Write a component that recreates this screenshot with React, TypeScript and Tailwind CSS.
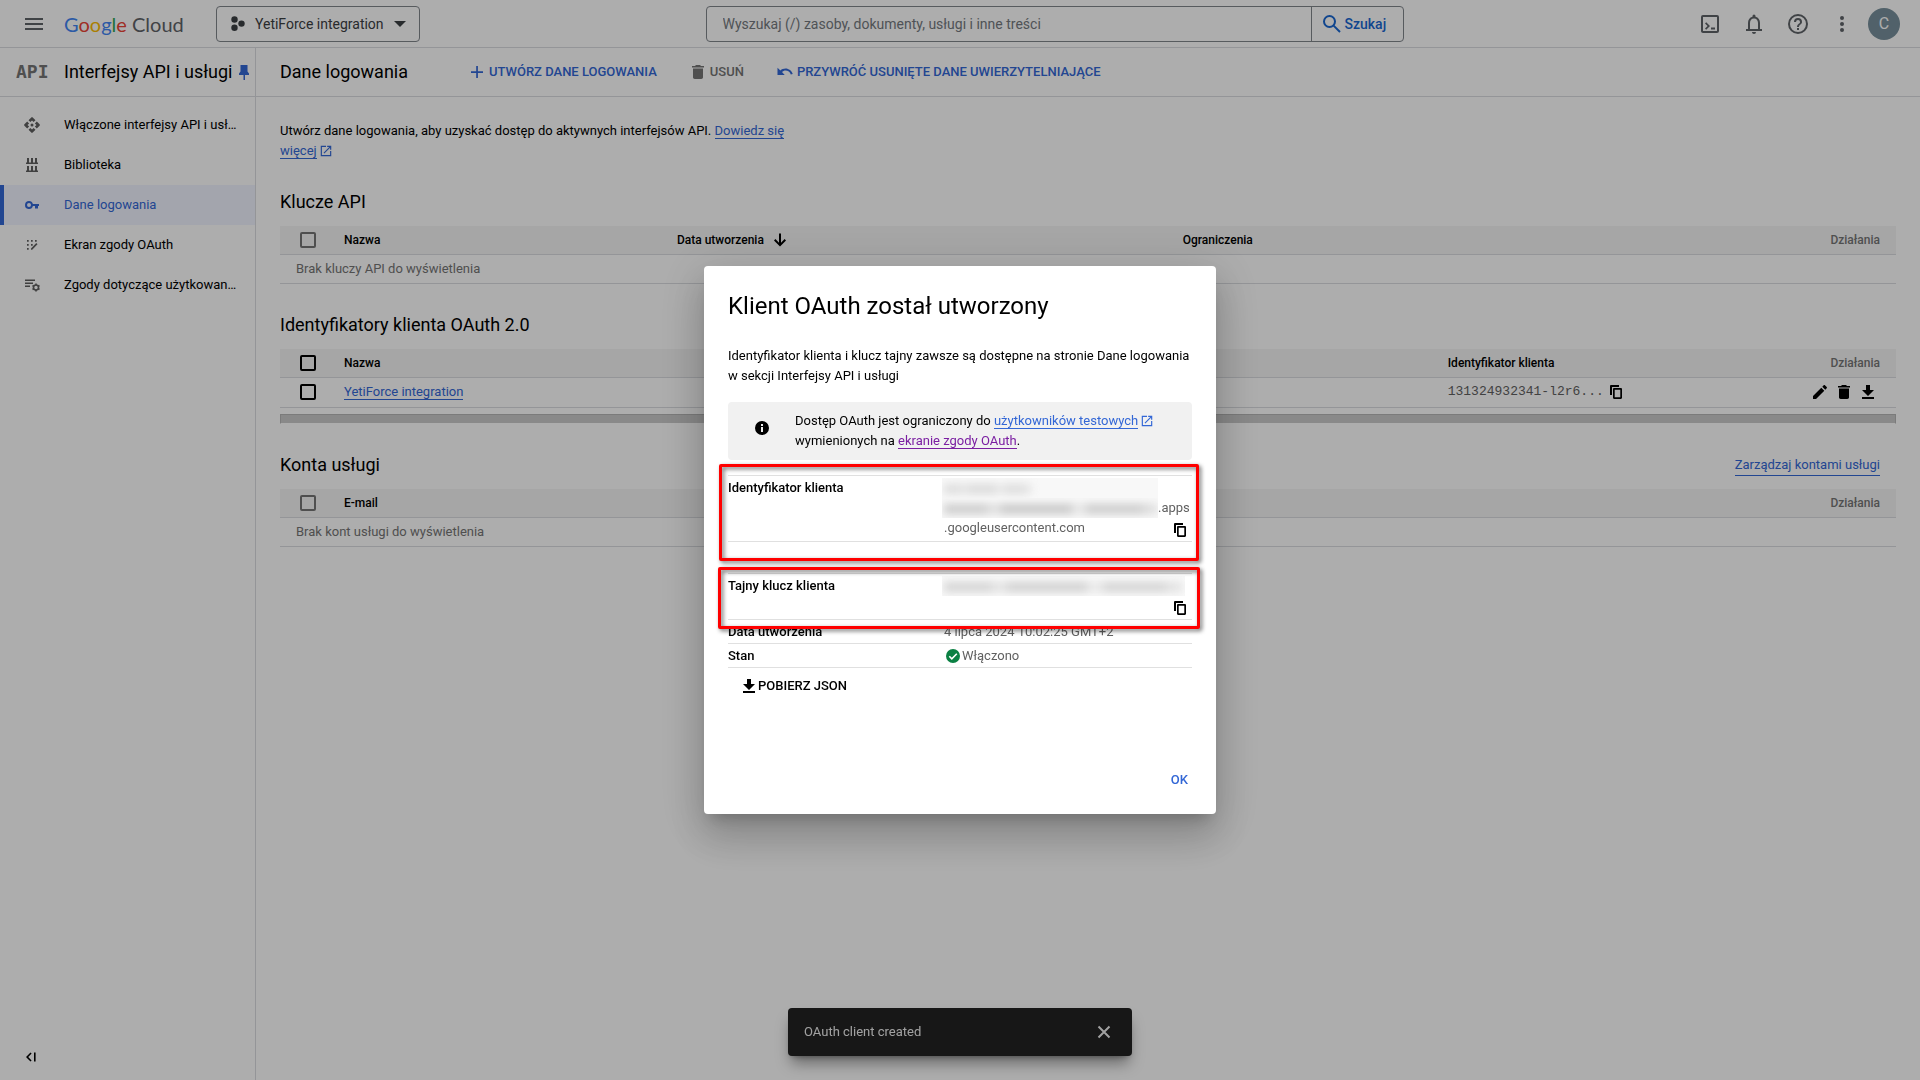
import type { ReactNode } from "react";

type IconProps = { children: ReactNode; size?: 18 | 24; className?: string };

function Icon({ children, size = 18, className = "" }: IconProps) {
  return (
    <svg
      viewBox={size === 24 ? "0 0 24 24" : "0 0 18 18"}
      width={size}
      height={size}
      fill="currentColor"
      aria-hidden="true"
      className={`shrink-0 ${className}`}
    >
      {children}
    </svg>
  );
}

const TrashIcon = ({ className }: { className?: string }) => (
  <Icon className={className}>
    <path d="M4 14.3c0 1 .8 1.7 1.7 1.7h6.6c.9 0 1.7-.7 1.7-1.7V5.5H4zM15 3h-3l-1-1H7L6 3H3v1.5h12z" />
  </Icon>
);

const DownloadIcon = () => (
  <Icon>
    <path d="M15 7h-4V2H7v5H3l6 6zM3 14v2h12v-2z" />
  </Icon>
);

const CopyIcon = () => (
  <Icon>
    <path d="M12 2H4.2C3.5 2 3 2.500 3 3.200V12h2V4h7zM13.800 5H7.200C6.500 5 6 5.500 6 6.200v8.600c0 .7.5 1.200 1.200 1.200h6.600c.7 0 1.200-.5 1.200-1.200V6.200c0-.7-.5-1.200-1.200-1.200zM13.300 14.300H7.700V6.700h5.600z" />
  </Icon>
);

const OpenIcon = () => (
  <svg viewBox="0 0 24 24" width="14" height="14" fill="currentColor" aria-hidden="true" className="ml-[2px] inline-block align-[-3px] text-[#3367d6]">
    <path d="M19 19H5V5h7V3H3v18h18v-9h-2zM14 3v2h3.6l-9.8 9.8 1.4 1.4L19 6.4V10h2V3z" />
  </svg>
);

function Link({ children, className = "border-[#3367d6] text-[#3367d6]" }: { children: ReactNode; className?: string }) {
  return (
    <a href="#" className={`border-b ${className}`}>
      {children}
    </a>
  );
}

function IconButton({ label, children, className = "" }: { label: string; children: ReactNode; className?: string }) {
  return (
    <button type="button" aria-label={label} className={`flex items-center justify-center ${className}`}>
      {children}
    </button>
  );
}

function TopBar() {
  return (
    <header className="flex h-12 items-center border-b border-[#dadce0] pr-5 pl-[22px]">
      <IconButton label="Menu" className="text-[#5f6368]">
        <Icon size={24}>
          <path d="M3 6h18v2H3zM3 11h18v2H3zM3 16h18v2H3z" />
        </Icon>
      </IconButton>
      <a href="#" className="ml-[18px] w-[118px] font-[Lato,sans-serif] text-xl leading-6 whitespace-nowrap text-[#5f6368]">
        <span className="text-[#4285f4]">G</span>
        <span className="text-[#ea4335]">o</span>
        <span className="text-[#fbbc04]">o</span>
        <span className="text-[#4285f4]">g</span>
        <span className="text-[#34a853]">l</span>
        <span className="text-[#ea4335]">e</span> Cloud
      </a>
      <button type="button" className="ml-[34px] flex h-9 w-[204px] items-center rounded border border-[#80868b] pl-3 text-sm text-[#3c4043]">
        <Icon>
          <circle cx="5.5" cy="4.5" r="3.2" />
          <circle cx="5.5" cy="12.8" r="3.2" />
          <circle cx="12.5" cy="8.6" r="3.2" />
        </Icon>
        <span className="ml-2">YetiForce integration</span>
        <svg viewBox="0 0 12 6" width="12" height="6" fill="currentColor" className="ml-[10px]" aria-hidden="true">
          <path d="M0 0h12L6 6z" />
        </svg>
      </button>
      <div className="flex flex-1 justify-center pr-[9px]">
        <form className="flex h-9 w-[698px] rounded border border-[#80868b] text-sm">
          <input
            type="text"
            aria-label="Wyszukaj"
            placeholder="Wyszukaj (/) zasoby, dokumenty, usługi i inne treści"
            className="min-w-0 flex-1 border-r border-[#80868b] bg-transparent pl-4 placeholder:text-[#757a80] placeholder:opacity-100"
          />
          <button type="button" className="flex w-[91px] items-center pl-[10px] font-medium text-[#1967d2]">
            <svg viewBox="0 0 20 20" width="20" height="20" fill="none" stroke="currentColor" strokeWidth="2" aria-hidden="true">
              <circle cx="7.5" cy="7.5" r="5.5" />
              <path d="M11.6 11.6 18 18" />
            </svg>
            <span className="ml-[3px]">Szukaj</span>
          </button>
        </form>
      </div>
      <div className="flex items-center gap-5 text-[#5f6368]">
        <IconButton label="Cloud Shell">
          <Icon size={24}>
            <path d="M5 3a2 2 0 0 0-2 2v14c0 1.100.900 2 2 2h14a2 2 0 0 0 2-2V5a2 2 0 0 0-2-2zM5 5h14v14H5z" fillRule="evenodd" />
            <path d="M7 11.400 9.600 14 7 16.600 8.200 17.800l3.800-3.800-3.800-3.800zM13 15.500h4v2h-4z" />
          </Icon>
        </IconButton>
        <IconButton label="Powiadomienia">
          <Icon size={24}>
            <path d="M12 22a2 2 0 0 0 2-2h-4c0 1.100.900 2 2 2zM18 17v-6c0-3.100-1.600-5.600-4.500-6.300V4a1.500 1.500 0 0 0-3 0v.700C7.600 5.400 6 7.900 6 11v6H4v2h16v-2zM16 17H8v-6c0-2.500 1.500-4.500 4-4.500s4 2 4 4.500z" />
          </Icon>
        </IconButton>
        <IconButton label="Pomoc">
          <Icon size={24}>
            <path d="M11 18h2v-2h-2zm1-16a10 10 0 1 0 0 20 10 10 0 0 0 0-20zm0 18a8 8 0 1 1 0-16 8 8 0 0 1 0 16zm0-14a4 4 0 0 0-4 4h2a2 2 0 1 1 4 0c0 2-3 1.750-3 5h2c0-2.250 3-2.500 3-5a4 4 0 0 0-4-4z" />
          </Icon>
        </IconButton>
        <IconButton label="Więcej opcji">
          <Icon size={24}>
            <circle cx="12" cy="6" r="2" />
            <circle cx="12" cy="12" r="2" />
            <circle cx="12" cy="18" r="2" />
          </Icon>
        </IconButton>
      </div>
      <button type="button" className="ml-[14px] size-8 rounded-full bg-[#78909c] text-base text-white">
        C
      </button>
    </header>
  );
}

const navItems: { label: string; active?: boolean; icon: ReactNode }[] = [
  {
    label: "Włączone interfejsy API i usł…",
    icon: (
      <>
        <circle cx="9" cy="9" r="1.500" />
        <path d="M9 4.500l1.600 1.600 1.900-1.900L9.700 1.400a1 1 0 0 0-1.400 0L5.500 4.200l1.900 1.900zM4.500 9l1.600-1.600-1.900-1.900L1.400 8.300a1 1 0 0 0 0 1.400l2.800 2.800 1.900-1.900zM13.500 9l-1.600 1.600 1.900 1.900 2.800-2.800a1 1 0 0 0 0-1.400l-2.800-2.800-1.900 1.900zM9 13.500l-1.600-1.600-1.900 1.900 2.800 2.800a1 1 0 0 0 1.400 0l2.800-2.800-1.900-1.900z" />
      </>
    ),
  },
  {
    label: "Biblioteka",
    icon: <path d="M4 2h2v4.500h2V2h2v4.500h2V2h2v4.500h1V8H3V6.500h1zM4 10h2v4.500h2V10h2v4.500h2V10h2v4.500h1V16H3v-1.500h1z" />,
  },
  {
    label: "Dane logowania",
    active: true,
    icon: <path fillRule="evenodd" d="M6 5a4 4 0 1 0 3.900 5H12v2.500h3V10h1V8H9.900A4 4 0 0 0 6 5zm0 2a2 2 0 1 1 0 4 2 2 0 0 1 0-4z" />,
  },
  {
    label: "Ekran zgody OAuth",
    icon: (
      <path d="M4 4h1.700v1.700H4zM8 4h1.700v1.700H8zM12 4h1.700v1.700H12zM4 8h1.700v1.700H4zM8 8h1.700v1.700H8zM4 12h1.700v1.700H4zM13.300 7l1.200 1.200-5.300 5.500H8v-1.300z" />
    ),
  },
  {
    label: "Zgody dotyczące użytkowan…",
    icon: (
      <>
        <path d="M2 3.500h10V5H2zM2 6.500h8V8H2zM2 9.500h5V11H2z" />
        <circle cx="13" cy="11.500" r="2.500" fill="none" stroke="currentColor" strokeWidth="1.600" />
        <path
          d="M13 7.500v1.500M13 14v1.500M9.500 9.500l1.300.8M15.200 12.700l1.300.8M9.500 13.500l1.300-.8M15.200 10.300l1.300-.8"
          stroke="currentColor"
          strokeWidth="1.600"
        />
      </>
    ),
  },
];

function Sidebar() {
  return (
    <aside className="flex w-64 shrink-0 flex-col border-r border-[#dadce0]">
      <div className="flex h-[49px] items-center border-b border-[#dadce0]">
        <span className="w-16 pl-4 font-['DejaVu_Sans_Mono',monospace] text-lg leading-6 font-bold text-[#757575]" aria-hidden="true">
          API
        </span>
        <h2 className="text-lg whitespace-nowrap">Interfejsy API i usługi</h2>
        <IconButton label="Przypnij" className="ml-[3px] text-[#3367d6]">
          <Icon>
            <path d="M5.500 2h7v6.500l1.500 2V12h-4v5H8.500v-5H4v-1.500l1.500-2z" />
          </Icon>
        </IconButton>
      </div>
      <nav className="flex flex-col pt-2">
        {navItems.map((item) => (
          <a
            key={item.label}
            href="#"
            aria-current={item.active ? "page" : undefined}
            className={
              item.active
                ? "flex h-10 items-center border-l-4 border-[#3367d6] bg-[#f0f4ff] pl-[19px] text-[#3367d6]"
                : "flex h-10 items-center pl-[23px]"
            }
          >
            <Icon className={item.active ? "" : "text-[#5f5f5f]"}>{item.icon}</Icon>
            <span className="ml-[23px] whitespace-nowrap">{item.label}</span>
          </a>
        ))}
      </nav>
      <IconButton label="Zwiń" className="mt-auto mb-[14px] ml-[22px] self-start">
        <Icon>
          <path d="M8.500 4.500 9.600 5.600 6.200 9l3.400 3.400-1.100 1.100L4 9zM12 4.500h1.600v9H12z" />
        </Icon>
      </IconButton>
    </aside>
  );
}

const th = "h-[29px] border-b border-[#dadce0] bg-[#f5f5f5] text-xs font-medium";
const thLeft = `${th} px-2 text-left`;

function HeadCheck({ enabled = false }: { enabled?: boolean }) {
  return (
    <th className="h-[29px] w-14 border-b border-[#dadce0] bg-[#f5f5f5] pl-5">
      <Check label="Zaznacz wszystko" enabled={enabled} />
    </th>
  );
}

function Check({ label, enabled = false }: { label: string; enabled?: boolean }) {
  return (
    <input
      type="checkbox"
      aria-label={label}
      disabled={!enabled}
      className="block size-4 appearance-none rounded-[2px] border-2 border-black disabled:border-[#757575]"
    />
  );
}

const ActionsHead = () => <th className={`${th} pr-4 text-right text-[#757575]`}>Działania</th>;

function DataTable({ children }: { children: ReactNode }) {
  return <table className="w-full table-fixed border-separate border-spacing-0">{children}</table>;
}

function EmptyRow({ span, children }: { span: number; children: ReactNode }) {
  return (
    <tr>
      <td colSpan={span} className="h-[29px] border-b border-[#dadce0] pl-4 text-[#757575]">
        {children}
      </td>
    </tr>
  );
}

function SectionTitle({ children, action }: { children: ReactNode; action?: ReactNode }) {
  return (
    <div className="mt-[17px] flex h-12 items-center justify-between pr-4">
      <h2 className="text-lg">{children}</h2>
      {action}
    </div>
  );
}

function Credentials() {
  return (
    <main className="min-w-0 flex-1">
      <div className="flex h-[49px] items-center border-b border-[#dadce0] pl-6 font-medium whitespace-nowrap">
        <h1 className="w-[188px] text-lg font-normal">Dane logowania</h1>
        <button type="button" className="flex items-center gap-[3px] text-[#3367d6]">
          <Icon>
            <path d="M8.200 3h1.700v5.200H15v1.700H9.900V15H8.200V9.900H3V8.200h5.200z" />
          </Icon>
          UTWÓRZ DANE LOGOWANIA
        </button>
        <button type="button" className="ml-8 flex items-center gap-[3px] text-[#757575]">
          <TrashIcon />
          USUŃ
        </button>
        <button type="button" className="ml-8 flex items-center gap-[3px] text-[#3367d6]">
          <Icon>
            <path d="M9.500 5.500C7.500 5.500 5.800 6.200 4.400 7.400L1.500 4.800V12h7.200L6 9.100C7 8.200 8.200 7.600 9.500 7.600c2.500 0 4.600 1.600 5.300 3.900l1.900-.6C15.700 7.800 12.900 5.500 9.500 5.500z" />
          </Icon>
          PRZYWRÓĆ USUNIĘTE DANE UWIERZYTELNIAJĄCE
        </button>
      </div>
      <div className="px-6 pt-6">
        <p className="max-w-[520px]">
          Utwórz dane logowania, aby uzyskać dostęp do aktywnych interfejsów API. <Link>Dowiedz się więcej</Link>
          <OpenIcon />
        </p>

        <SectionTitle>Klucze API</SectionTitle>
        <DataTable>
          <thead>
            <tr>
              <HeadCheck />
              <th className={`${thLeft} w-[20.6%]`}>Nazwa</th>
              <th className={`${thLeft} w-[31.3%]`}>
                <span className="flex items-center gap-[7px]">
                  Data utworzenia
                  <Icon>
                    <path d="M8 2.500h2v9.200l3.600-3.600L15 9.500l-6 6-6-6 1.400-1.400L8 11.700z" />
                  </Icon>
                </span>
              </th>
              <th className={thLeft}>Ograniczenia</th>
              <ActionsHead />
            </tr>
          </thead>
          <tbody>
            <EmptyRow span={5}>Brak kluczy API do wyświetlenia</EmptyRow>
          </tbody>
        </DataTable>

        <SectionTitle>Identyfikatory klienta OAuth 2.0</SectionTitle>
        <DataTable>
          <thead>
            <tr>
              <HeadCheck enabled />
              <th className={`${thLeft} w-[68.3%]`}>Nazwa</th>
              <th className={thLeft}>Identyfikator klienta</th>
              <ActionsHead />
            </tr>
          </thead>
          <tbody>
            <tr>
              <td className="h-[30px] border-b border-[#dadce0] pb-px pl-5">
                <Check label="Zaznacz YetiForce integration" enabled />
              </td>
              <td className="border-b border-[#dadce0] px-2 pb-px">
                <Link>YetiForce integration</Link>
              </td>
              <td className="border-b border-[#dadce0] px-2 pb-px">
                <span className="flex items-center gap-[3px] font-['Liberation_Mono',monospace] text-[#616161]">
                  131324932341-l2r6...
                  <IconButton label="Kopiuj identyfikator" className="text-black">
                    <CopyIcon />
                  </IconButton>
                </span>
              </td>
              <td className="border-b border-[#dadce0] pr-[19px] pb-px">
                <span className="flex justify-end gap-[6px]">
                  <IconButton label="Edytuj">
                    <Icon>
                      <path d="M2 13v3h3l8.300-8.300-3-3zM15.700 5.300c.4-.4.4-.9 0-1.200l-1.800-1.800c-.3-.4-.8-.4-1.200 0l-1.400 1.400 3 3z" />
                    </Icon>
                  </IconButton>
                  <IconButton label="Usuń">
                    <TrashIcon />
                  </IconButton>
                  <IconButton label="Pobierz">
                    <DownloadIcon />
                  </IconButton>
                </span>
              </td>
            </tr>
          </tbody>
        </DataTable>
        <div className="mt-[6px] h-[10px] border border-[#b5b5b5] border-b-white bg-[#cacaca]" />

        <SectionTitle action={<Link>Zarządzaj kontami usługi</Link>}>Konta usługi</SectionTitle>
        <DataTable>
          <thead>
            <tr>
              <HeadCheck />
              <th className={thLeft}>E-mail</th>
              <ActionsHead />
            </tr>
          </thead>
          <tbody>
            <EmptyRow span={3}>Brak kont usługi do wyświetlenia</EmptyRow>
          </tbody>
        </DataTable>
      </div>
    </main>
  );
}

function Toast() {
  return (
    <div
      role="status"
      className="fixed bottom-6 left-1/2 flex h-12 w-[344px] -translate-x-1/2 items-center justify-between rounded bg-[#222222] pr-[19px] pl-4 text-[#eeeeee] shadow-lg shadow-black/40"
    >
      OAuth client created
      <IconButton label="Zamknij">
        <svg viewBox="0 0 18 18" width="18" height="18" stroke="currentColor" strokeWidth="2" aria-hidden="true">
          <path d="M3.500 3.500l11 11M14.500 3.500l-11 11" />
        </svg>
      </IconButton>
    </div>
  );
}

const Highlight = ({ className }: { className: string }) => (
  <div className={`pointer-events-none absolute z-10 rounded-[2px] border-[3px] border-[#ff0000] drop-shadow-[2px_2px_2px_rgba(0,0,0,0.6)] ${className}`} />
);

/* Obscured value: a soft grey smudge in place of the characters. */
function Redacted({ className, smudge }: { className: string; smudge: string }) {
  return (
    <div className={`-ml-[2px] h-5 shrink-0 overflow-hidden bg-[#f8f8f8] ${className}`} aria-hidden="true">
      <div className={`mt-[6px] ml-[2px] flex h-[10px] blur-[4px] ${smudge}`}>
        <div className="flex-3 bg-[#cccccc]" />
        <div className="flex-1 bg-[#dddddd]" />
        <div className="flex-5 bg-[#c8c8c8]" />
        <div className="flex-1 bg-[#e4e4e4]" />
        <div className="flex-4 bg-[#cccccc]" />
        <div className="flex-1 bg-[#dcdcdc]" />
      </div>
    </div>
  );
}

function OAuthDialog() {
  return (
    <div className="fixed inset-0 flex items-center justify-center bg-black/32">
      <div
        role="dialog"
        aria-modal="true"
        aria-labelledby="dialog-title"
        className="w-lg rounded bg-white px-6 pt-6 pb-4 shadow-[0_11px_15px_-7px_rgba(0,0,0,0.2),0_24px_38px_3px_rgba(0,0,0,0.14),0_9px_46px_8px_rgba(0,0,0,0.12)]"
      >
        <h2 id="dialog-title" className="text-2xl">
          Klient OAuth został utworzony
        </h2>
        <p className="mt-6">
          Identyfikator klienta i klucz tajny zawsze są dostępne na stronie Dane logowania w&nbsp;sekcji Interfejsy API i usługi
        </p>
        <div className="mt-4 flex items-start rounded bg-[#f1f1f1] py-[9px] pl-[25px]">
          <Icon className="mt-2">
            <path fillRule="evenodd" d="M9 2a7 7 0 1 0 0 14A7 7 0 0 0 9 2zM8 5h2v2H8zM8 8h2v5H8z" />
          </Icon>
          <p className="ml-6">
            Dostęp OAuth jest ograniczony do <Link>użytkowników testowych</Link>
            <OpenIcon />
            <br />
            wymienionych na <Link className="border-[#7b1fa2] text-[#7b1fa2]">ekranie zgody OAuth</Link>.
          </p>
        </div>

        <dl className="mt-[15px] text-[#616161]">
          <div className="relative flex border-y border-[#e0e0e0] pt-[2px] pb-[3px]">
            <dt className="w-[216px] font-medium text-black">Identyfikator klienta</dt>
            <dd className="flex-1">
              <Redacted className="w-[216px]" smudge="w-[88px] opacity-60" />
              <div className="flex">
                <Redacted className="w-[216px]" smudge="w-[213px]" />
                .apps
              </div>
              <div className="flex justify-between pr-[3px]">
                .googleusercontent.com
                <IconButton label="Kopiuj identyfikator klienta" className="mt-[3px] -mb-px text-black">
                  <CopyIcon />
                </IconButton>
              </div>
            </dd>
            <Highlight className="-top-[12px] -right-[7px] -bottom-[20px] -left-[9px]" />
          </div>
          <div className="relative mt-[31px] flex border-y border-[#e0e0e0] pt-[2px] pb-[3px]">
            <dt className="w-[216px] font-medium text-black">Tajny klucz klienta</dt>
            <dd className="flex-1">
              <Redacted className="w-[243px]" smudge="w-[238px] opacity-80" />
              <div className="flex h-5 justify-end pr-[3px]">
                <IconButton label="Kopiuj tajny klucz klienta" className="mt-[3px] -mb-px text-black">
                  <CopyIcon />
                </IconButton>
              </div>
            </dd>
            <Highlight className="-top-[7px] -right-[8px] -bottom-[10px] -left-[10px]" />
          </div>
          <div className="flex border-b border-[#e0e0e0] pt-[2px] pb-px">
            <dt className="w-[216px] font-medium text-black">Data utworzenia</dt>
            <dd>4 lipca 2024 10:02:25 GMT+2</dd>
          </div>
          <div className="flex border-b border-[#e0e0e0] pt-[2px] pb-px">
            <dt className="w-[216px] font-medium text-black">Stan</dt>
            <dd className="flex items-center">
              <Icon>
                <circle cx="9" cy="9" r="7" fill="#0b8043" />
                <path d="m5.300 9.300 2.500 2.500 5-5" fill="none" stroke="#fff" strokeWidth="1.600" />
              </Icon>
              Włączono
            </dd>
          </div>
        </dl>
        <button type="button" className="flex h-9 items-center pl-3 font-medium">
          <DownloadIcon />
          POBIERZ JSON
        </button>
        <div className="mt-[58px] flex justify-end">
          <button type="button" className="h-9 px-1 font-medium text-[#3367d6]">
            OK
          </button>
        </div>
      </div>
    </div>
  );
}

export default function App() {
  return (
    <div className="flex min-h-screen flex-col bg-white font-[Roboto,sans-serif] text-[13px] leading-5 text-black">
      <TopBar />
      <div className="flex flex-1">
        <Sidebar />
        <Credentials />
      </div>
      <Toast />
      <OAuthDialog />
    </div>
  );
}
